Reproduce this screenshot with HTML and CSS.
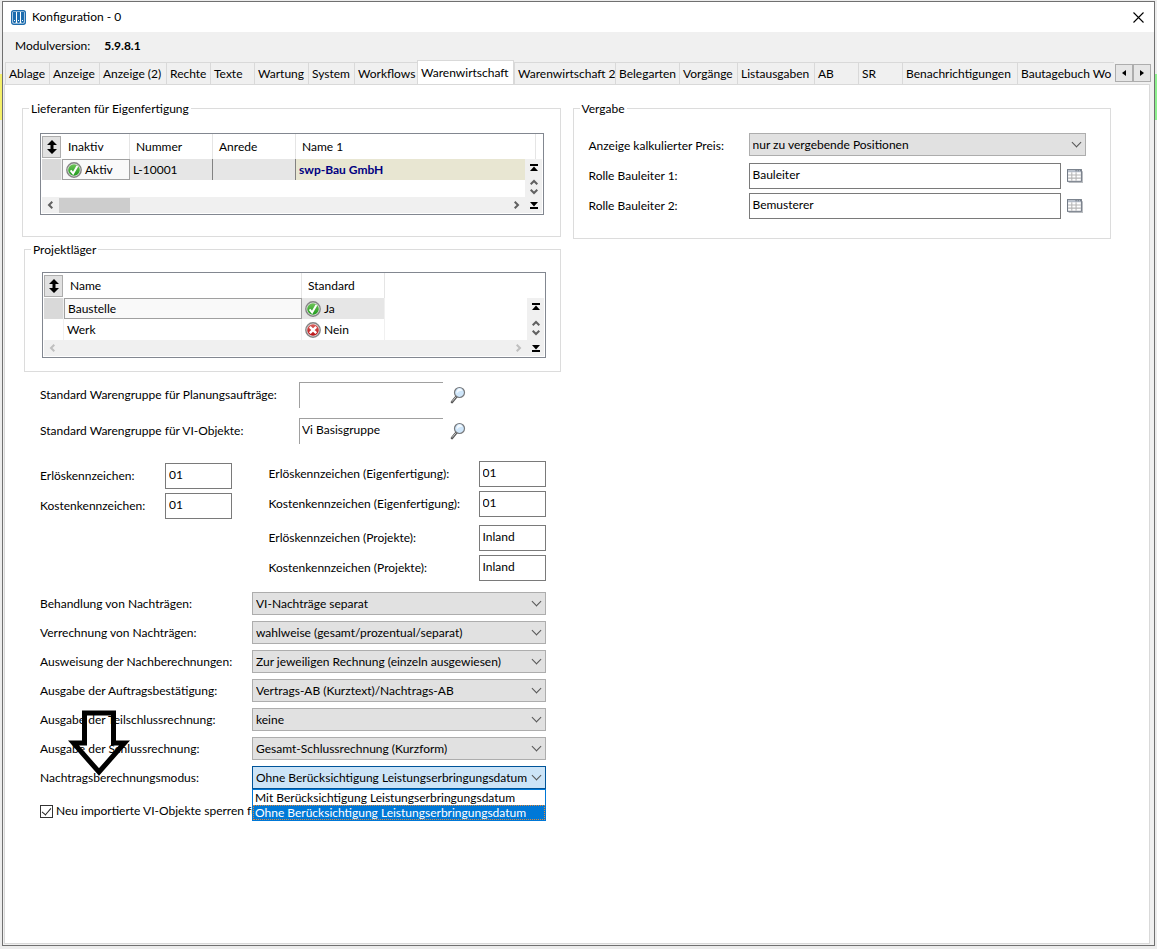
FILE: index.html
```html
<!DOCTYPE html>
<html lang="de">
<head>
  <meta charset="UTF-8">
  <meta name="viewport" content="width=device-width, initial-scale=1.0">
  <title>Konfiguration - 0</title>
  <link rel="stylesheet" href="styles.css">
</head>
<body>
  <!-- Symbole -->
  <svg class="defs" width="0" height="0" aria-hidden="true">
    <defs>
      <linearGradient id="green" x1="0" y1="0" x2="0" y2="1">
        <stop offset="0" stop-color="#6fc45a"/>
        <stop offset="1" stop-color="#1f9a1c"/>
      </linearGradient>
      <linearGradient id="red" x1="0" y1="0" x2="0" y2="1">
        <stop offset="0" stop-color="#d9605c"/>
        <stop offset="1" stop-color="#b80f12"/>
      </linearGradient>
      <symbol id="ok" viewBox="0 0 16 16">
        <circle cx="8" cy="8" r="7.2" fill="#e4e4e4" stroke="#858585" stroke-width="1.4"/>
        <circle cx="8" cy="8" r="5.8" fill="url(#green)"/>
        <path d="M4.6 8.4l2.5 3L11.4 4" fill="none" stroke="#fff" stroke-width="2"/>
      </symbol>
      <symbol id="no" viewBox="0 0 16 16">
        <circle cx="8" cy="8" r="7.2" fill="#e4e4e4" stroke="#858585" stroke-width="1.4"/>
        <circle cx="8" cy="8" r="5.8" fill="url(#red)"/>
        <path d="M4.800 4.800l6.400 6.400M11.200 4.800l-6.400 6.400" stroke="#fff" stroke-width="2.4"/>
      </symbol>
      <symbol id="sort" viewBox="0 0 10 14">
        <path d="M5 0l5 5H6.500v4H10l-5 5-5-5h3.500V5H0z"/>
      </symbol>
      <symbol id="search" viewBox="0 0 16 18">
        <path d="M6.500 10.500L2 16" stroke="#555" stroke-width="2.600" stroke-linecap="round"/>
        <path d="M5.800 11L2 15.600" stroke="#c8c8c8" stroke-width="1"/>
        <circle cx="9.500" cy="6.500" r="5" fill="#cfe6fa" stroke="#77797c" stroke-width="1.200"/>
        <path d="M6.500 7.500q3-3.500 6-2.500-.5-2.500-3-2.500-3 .5-3 5z" fill="#f4faff"/>
      </symbol>
      <symbol id="calendar" viewBox="0 0 15 13">
        <path d="M1.500 12.500h13V2" fill="none" stroke="#b9bcc0"/>
        <rect x=".5" y=".5" width="13" height="11" fill="#fff" stroke="#737b86"/>
        <path d="M1 1h12v2H1z" fill="#b4bcc8"/>
        <path d="M8 1.500h1m1 0h1m1 0h1" stroke="#4c5664"/>
        <path d="M1 5.500h12M1 8.500h12M4.500 3v8M8.500 3v8" stroke="#b5b5b5"/>
      </symbol>
      <symbol id="first" viewBox="0 0 8 7">
        <path d="M0 0h8v2H0zM4 2.500L8 7H0z"/>
      </symbol>
      <symbol id="last" viewBox="0 0 8 7">
        <path d="M0 5h8v2H0zM0 0h8L4 4.500z"/>
      </symbol>
      <symbol id="up" viewBox="0 0 8 6">
        <path d="M.7 5.300L4 2l3.300 3.300" fill="none" stroke="currentColor" stroke-width="2"/>
      </symbol>
      <symbol id="down" viewBox="0 0 8 6">
        <path d="M.7.7L4 4 7.300.7" fill="none" stroke="currentColor" stroke-width="2"/>
      </symbol>
      <symbol id="left" viewBox="0 0 6 8">
        <path d="M5.300.7L2 4l3.300 3.300" fill="none" stroke="currentColor" stroke-width="2"/>
      </symbol>
      <symbol id="right" viewBox="0 0 6 8">
        <path d="M.7.7L4 4 .7 7.300" fill="none" stroke="currentColor" stroke-width="2"/>
      </symbol>
    </defs>
  </svg>

  <div class="window">
    <header class="titlebar">
      <svg class="logo" width="15" height="15" viewBox="0 0 15 15">
        <rect x=".7" y=".7" width="13.600" height="13.600" rx="2" fill="#fff" stroke="#1c6cae" stroke-width="1.400"/>
        <path d="M2 2h3v9.500a1.500 1.500 0 0 1-3 0zM6 2h3v9.500a1.500 1.500 0 0 1-3 0zM10 2h3v9.500a1.500 1.500 0 0 1-3 0z" fill="#1c6cae"/>
        <path d="M3 10h1v1H3zM7 10h1v1H7zM11 10h1v1h-1z" fill="#fff"/>
      </svg>
      <h1>Konfiguration - 0</h1>
      <button class="close" type="button" aria-label="Schließen">
        <svg width="11" height="11" viewBox="0 0 11 11"><path d="M.5.5l10 10M10.500.5l-10 10" stroke="#000" stroke-width="1.100"/></svg>
      </button>
    </header>

    <div class="version"><span>Modulversion:</span><b>5.9.8.1</b></div>

    <nav class="tabbar">
      <div class="tabs" role="tablist">
        <button type="button" role="tab">Ablage</button>
        <button type="button" role="tab">Anzeige</button>
        <button type="button" role="tab">Anzeige (2)</button>
        <button type="button" role="tab">Rechte</button>
        <button type="button" role="tab">Texte</button>
        <button type="button" role="tab">Wartung</button>
        <button type="button" role="tab">System</button>
        <button type="button" role="tab">Workflows</button>
        <button type="button" role="tab" class="active" aria-selected="true">Warenwirtschaft</button>
        <button type="button" role="tab">Warenwirtschaft 2</button>
        <button type="button" role="tab">Belegarten</button>
        <button type="button" role="tab">Vorgänge</button>
        <button type="button" role="tab">Listausgaben</button>
        <button type="button" role="tab">AB</button>
        <button type="button" role="tab">SR</button>
        <button type="button" role="tab">Benachrichtigungen</button>
        <button type="button" role="tab">Bautagebuch Wo</button>
      </div>
      <div class="spin">
        <button type="button" aria-label="Zurück"><svg width="4" height="6" viewBox="0 0 4 6"><path d="M4 0v6L0 3z"/></svg></button>
        <button type="button" aria-label="Weiter"><svg width="4" height="6" viewBox="0 0 4 6"><path d="M0 0v6l4-3z"/></svg></button>
      </div>
    </nav>

    <main class="panel">
      <div class="column">
        <fieldset class="group suppliers">
          <legend>Lieferanten für Eigenfertigung</legend>
          <div class="datagrid">
            <table>
              <colgroup><col class="c-mark"><col class="c-state"><col class="c-mid"><col class="c-mid"><col class="c-name1"></colgroup>
              <thead>
                <tr>
                  <th><button class="sort" type="button" aria-label="Sortieren"><svg width="10" height="14"><use href="#sort"/></svg></button></th>
                  <th>Inaktiv</th>
                  <th>Nummer</th>
                  <th>Anrede</th>
                  <th>Name 1</th>
                </tr>
              </thead>
              <tbody>
                <tr class="selected">
                  <td class="mark"></td>
                  <td class="focus"><svg width="16" height="16"><use href="#ok"/></svg>Aktiv</td>
                  <td class="ruled">L-10001</td>
                  <td class="ruled"></td>
                  <td class="key">swp-Bau GmbH</td>
                </tr>
              </tbody>
            </table>
            <div class="vscroll">
              <svg width="8" height="7"><use href="#first"/></svg>
              <span><svg width="8" height="6"><use href="#up"/></svg><svg width="8" height="6"><use href="#down"/></svg></span>
              <svg width="8" height="7"><use href="#last"/></svg>
            </div>
            <div class="hscroll">
              <svg width="6" height="8"><use href="#left"/></svg>
              <i class="thumb"></i>
              <svg width="6" height="8"><use href="#right"/></svg>
            </div>
          </div>
        </fieldset>

        <fieldset class="group stores">
          <legend>Projektläger</legend>
          <div class="datagrid">
            <table>
              <colgroup><col class="c-mark"><col class="c-name"><col class="c-mid"></colgroup>
              <thead>
                <tr>
                  <th><button class="sort" type="button" aria-label="Sortieren"><svg width="10" height="14"><use href="#sort"/></svg></button></th>
                  <th>Name</th>
                  <th>Standard</th>
                </tr>
              </thead>
              <tbody>
                <tr class="selected">
                  <td class="mark"></td>
                  <td class="focus">Baustelle</td>
                  <td><svg width="16" height="16"><use href="#ok"/></svg>Ja</td>
                </tr>
                <tr>
                  <td></td>
                  <td>Werk</td>
                  <td><svg width="16" height="16"><use href="#no"/></svg>Nein</td>
                </tr>
              </tbody>
            </table>
            <div class="vscroll">
              <svg width="8" height="7"><use href="#first"/></svg>
              <span><svg width="8" height="6"><use href="#up"/></svg><svg width="8" height="6"><use href="#down"/></svg></span>
              <svg width="8" height="7"><use href="#last"/></svg>
            </div>
            <div class="hscroll disabled">
              <svg width="6" height="8"><use href="#left"/></svg>
              <svg width="6" height="8"><use href="#right"/></svg>
            </div>
          </div>
        </fieldset>

        <div class="lookups">
          <label for="wg-plan">Standard Warengruppe für Planungsaufträge:</label>
          <input id="wg-plan" type="text" value="">
          <button type="button" aria-label="Suchen"><svg width="16" height="18"><use href="#search"/></svg></button>
          <label for="wg-vi">Standard Warengruppe für VI-Objekte:</label>
          <input id="wg-vi" type="text" value="Vi Basisgruppe">
          <button type="button" aria-label="Suchen"><svg width="16" height="18"><use href="#search"/></svg></button>
        </div>

        <div class="marks">
          <div class="pairs short">
            <label for="erl">Erlöskennzeichen:</label>
            <input id="erl" type="text" value="01">
            <label for="kost">Kostenkennzeichen:</label>
            <input id="kost" type="text" value="01">
          </div>
          <div class="stack">
            <div class="pairs">
              <label for="erl-eigen">Erlöskennzeichen (Eigenfertigung):</label>
              <input id="erl-eigen" type="text" value="01">
              <label for="kost-eigen">Kostenkennzeichen (Eigenfertigung):</label>
              <input id="kost-eigen" type="text" value="01">
            </div>
            <div class="pairs">
              <label for="erl-proj">Erlöskennzeichen (Projekte):</label>
              <input id="erl-proj" type="text" value="Inland">
              <label for="kost-proj">Kostenkennzeichen (Projekte):</label>
              <input id="kost-proj" type="text" value="Inland">
            </div>
          </div>
        </div>

        <div class="modes">
          <label for="m1">Behandlung von Nachträgen:</label>
          <div class="combo"><select id="m1"><option>VI-Nachträge separat</option></select></div>
          <label for="m2">Verrechnung von Nachträgen:</label>
          <div class="combo"><select id="m2"><option>wahlweise (gesamt/prozentual/separat)</option></select></div>
          <label for="m3">Ausweisung der Nachberechnungen:</label>
          <div class="combo"><select id="m3"><option>Zur jeweiligen Rechnung (einzeln ausgewiesen)</option></select></div>
          <label for="m4">Ausgabe der Auftragsbestätigung:</label>
          <div class="combo"><select id="m4"><option>Vertrags-AB (Kurztext)/Nachtrags-AB</option></select></div>
          <label for="m5">Ausgabe der Teilschlussrechnung:</label>
          <div class="combo"><select id="m5"><option>keine</option></select></div>
          <label for="m6">Ausgabe der Schlussrechnung:</label>
          <div class="combo"><select id="m6"><option>Gesamt-Schlussrechnung (Kurzform)</option></select></div>
          <label for="m7">Nachtragsberechnungsmodus:</label>
          <div class="combo open">
            <select id="m7"><option>Ohne Berücksichtigung Leistungserbringungsdatum</option></select>
            <ul class="dropdown" role="listbox">
              <li role="option">Mit Berücksichtigung Leistungserbringungsdatum</li>
              <li role="option" class="current" aria-selected="true">Ohne Berücksichtigung Leistungserbringungsdatum</li>
            </ul>
          </div>
          <svg class="pointer" width="62" height="68" viewBox="0 0 62 68" aria-hidden="true">
            <path d="M16.500 3h29v30h11L31 62 5.500 33h11z" fill="none" stroke="#000" stroke-width="5"/>
          </svg>
        </div>

        <label class="check"><input type="checkbox" checked>Neu importierte VI-Objekte sperren für</label>
      </div>

      <div class="column">
        <fieldset class="group award">
          <legend>Vergabe</legend>
          <div class="fields">
            <label for="preis">Anzeige kalkulierter Preis:</label>
            <div class="combo wide"><select id="preis"><option>nur zu vergebende Positionen</option></select></div>
            <label for="rolle1">Rolle Bauleiter 1:</label>
            <input id="rolle1" type="text" value="Bauleiter">
            <button type="button" aria-label="Auswählen"><svg width="16" height="14"><use href="#calendar"/></svg></button>
            <label for="rolle2">Rolle Bauleiter 2:</label>
            <input id="rolle2" type="text" value="Bemusterer">
            <button type="button" aria-label="Auswählen"><svg width="16" height="14"><use href="#calendar"/></svg></button>
          </div>
        </fieldset>
      </div>
    </main>
  </div>
</body>
</html>
```
FILE: styles.css
```css
* {
  box-sizing: border-box;
}
body {
  margin: 0;
  min-height: 100vh;
  padding: 1px 2px 3px;
  display: flex;
  flex-direction: column;
  background:
    linear-gradient(#8df08d, #8df08d) right 74px / 2px 46px no-repeat,
    linear-gradient(#f5f06a, #f5f06a) left 74px / 2px 46px no-repeat,
    #ececec;
}
body, button, input, select {
  font: 12px/16px Lato, "Open Sans", sans-serif;
  color: #000;
}
button {
  padding: 0;
  border: 0;
  background: none;
}
svg {
  display: block;
}
.defs {
  position: absolute;
}
.window {
  flex: 1;
  display: flex;
  flex-direction: column;
  border: 1px solid #707070;
  background: #f0f0f0;
}

/* Titelleiste */
.titlebar {
  display: flex;
  align-items: center;
  height: 30px;
  padding: 0 10px 0 8px;
  background: #fff;
}
.titlebar h1 {
  flex: 1;
  margin: 0 0 0 6px;
  font-size: 12px;
  font-weight: normal;
}
.version {
  display: flex;
  align-items: center;
  gap: 14px;
  height: 28px;
  padding-left: 12px;
}

/* Register */
.tabbar {
  display: flex;
  align-items: flex-end;
  padding: 0 3px 0 2px;
}
.tabs {
  flex: 1;
  min-width: 0;
  display: grid;
  grid-template-columns: 44px 50px 67px 44px 44px 54px 46px 63px 97px 101px 64px 58px 77px 44px 44px 115px 1fr;
  align-items: end;
  height: 24px;
  overflow: hidden;
}
.tabs button {
  height: 22px;
  padding-left: 3px;
  border: 1px solid #d9d9d9;
  border-width: 1px 0 0 1px;
  text-align: left;
  white-space: nowrap;
  overflow: hidden;
}
.tabs .active {
  height: 24px;
  border-right-width: 1px;
  background: #fff;
}
.spin {
  display: flex;
  margin: 0 0 2px 1px;
}
.spin button {
  display: flex;
  align-items: center;
  justify-content: center;
  width: 18px;
  height: 18px;
  border: 1px solid #adadad;
  background: #e6e6e6;
}
.panel {
  flex: 1;
  display: grid;
  grid-template-columns: 1fr 1fr;
  gap: 12px;
  margin: 0 4px 1px 1px;
  padding: 16px 38px 16px 17px;
  border: 1px solid #d9d9d9;
  background: #fff;
}

/* Gruppen */
.group {
  min-width: 0;
  margin: 0;
  padding: 0 16px 0 17px;
  border: 1px solid #dcdcdc;
}
.group legend {
  margin-left: -11px;
  padding: 0 2px;
  line-height: 15px;
}
.suppliers {
  height: 136px;
}
.stores {
  height: 130px;
  margin: 5px 0 0 2px;
}
.suppliers .datagrid, .award .fields {
  margin-top: 17px;
}
.stores .datagrid {
  margin-top: 15px;
  margin-right: -2px;
}

/* Tabellen */
.datagrid {
  display: grid;
  grid-template-columns: 1fr 17px;
  grid-template-rows: 25px minmax(38px, auto) 16px;
  padding: 0 1px 1px;
  border: 1px solid #828790;
}
.datagrid table {
  grid-area: 1 / 1 / 3 / 3;
  align-self: start;
  justify-self: start;
  table-layout: fixed;
  width: 0;
  border-collapse: separate;
  border-spacing: 0;
}
.c-mark {
  width: 20px;
}
.c-state {
  width: 68px;
}
.c-mid {
  width: 83px;
}
.c-name1 {
  width: 240px;
}
.c-name {
  width: 238px;
}
.datagrid th {
  height: 25px;
  padding: 0 0 0 6px;
  border-right: 1px solid #e5e5e5;
  text-align: left;
  font-weight: normal;
}
.datagrid th:first-child {
  padding: 0;
  border: 0;
}
.datagrid td {
  height: 21px;
  padding: 0 3px;
  border-right: 1px solid #f0f0f0;
}
.datagrid td svg {
  display: inline-block;
  margin-right: 3px;
  vertical-align: -4px;
}
.datagrid .selected td {
  background: #e6e6e6;
}
.datagrid .selected .mark {
  background: #d9d9d9;
}
.datagrid .selected .focus {
  padding: 0 3px;
  border: 1px solid #a0a0a0;
  background: #f9f9f9;
}
.datagrid .selected .ruled {
  border-right-color: #828282;
}
.datagrid .selected .key {
  background: #e8e6d2;
  color: #000080;
  font-weight: bold;
}
.sort {
  display: flex;
  align-items: center;
  justify-content: center;
  width: 19px;
  height: 22px;
  border: 1px solid #adadad;
  background: #e1e1e1;
}
.vscroll {
  grid-area: 2 / 2 / 4 / 3;
  z-index: 1;
  display: flex;
  flex-direction: column;
  align-items: center;
  justify-content: space-between;
  padding: 5px 0 4px 2px;
  background: #f0f0f0;
}
.vscroll span {
  display: flex;
  flex-direction: column;
  gap: 4px;
  color: #606060;
}
.hscroll {
  grid-area: 3 / 1 / 4 / 2;
  display: flex;
  align-items: center;
  padding: 0 5px;
  background: #f0f0f0;
  color: #606060;
}
.hscroll svg:last-child {
  margin-left: auto;
}
.hscroll.disabled {
  color: #bfbfbf;
}
.thumb {
  width: 71px;
  height: 15px;
  margin-left: 6px;
  background: #cdcdcd;
}

/* Eingabefelder */
input[type="text"] {
  width: 100%;
  height: 26px;
  padding: 0 3px 4px;
  border: 1px solid #7a7a7a;
  background: #fff;
}
.lookups {
  display: grid;
  grid-template-columns: 259px 144px 16px;
  column-gap: 0;
  row-gap: 10px;
  align-items: center;
  margin: 10px 0 0 18px;
}
.lookups input[type="text"] {
  padding-left: 2px;
  border-color: #a0a0a0;
  border-width: 1px 0 0 1px;
}
.lookups button {
  margin-left: 7px;
}
.marks {
  display: flex;
  justify-content: space-between;
  align-items: flex-start;
  margin: 17px 15px 0 18px;
}
.stack {
  display: grid;
  gap: 8px;
}
.pairs {
  display: grid;
  grid-template-columns: 210px 67px;
  gap: 4px 0;
  align-items: center;
}
.pairs.short {
  grid-template-columns: 125px 67px;
  padding-top: 2px;
}
.modes {
  position: relative;
  display: grid;
  grid-template-columns: 212px 1fr;
  gap: 6px 0;
  align-items: center;
  margin: 11px 15px 0 18px;
}
.combo {
  position: relative;
}
.combo select {
  display: block;
  width: 100%;
  height: 23px;
  padding: 0 18px 0 3px;
  border: 1px solid #adadad;
  border-radius: 0;
  background: #e1e1e1;
  appearance: none;
}
.combo::after {
  content: "";
  position: absolute;
  top: 6px;
  right: 6px;
  width: 6px;
  height: 6px;
  border: solid #555;
  border-width: 0 1px 1px 0;
  transform: rotate(45deg);
}
.combo.open select {
  border-color: #005499;
  background: #cce4f7;
}
.dropdown {
  position: absolute;
  z-index: 2;
  top: 100%;
  left: 0;
  right: 0;
  margin: 0;
  border: 1px solid #0078d7;
  padding: 0;
  background: #fff;
  list-style: none;
}
.dropdown li {
  height: 15px;
  padding-left: 2px;
  line-height: 15px;
  white-space: nowrap;
  overflow: hidden;
}
.dropdown .current {
  background: #0078d7;
  color: #fff;
  outline: 1px dotted #e08a3c;
  outline-offset: -1px;
}
.pointer {
  position: absolute;
  left: 28px;
  bottom: 11px;
}
.check {
  display: flex;
  align-items: center;
  gap: 3px;
  margin: 14px 0 0 18px;
  white-space: nowrap;
}
.check input {
  display: grid;
  place-items: center;
  width: 13px;
  height: 13px;
  margin: 0;
  border: 1px solid #333;
  background: #fff;
  appearance: none;
}
.check input:checked::before {
  content: "";
  width: 4px;
  height: 8px;
  margin-top: -2px;
  border: solid #222;
  border-width: 0 1px 1px 0;
  transform: rotate(40deg);
}

/* Vergabe */
.award {
  height: 138px;
  padding: 0 24px 0 15px;
}
.award legend {
  margin-left: -9px;
}
.fields {
  display: grid;
  grid-template-columns: 160px 1fr 25px;
  gap: 4px 0;
  align-items: center;
}
.fields .wide {
  grid-column: 2 / 4;
  margin-bottom: 3px;
}
.fields button {
  margin-left: 6px;
}
```
